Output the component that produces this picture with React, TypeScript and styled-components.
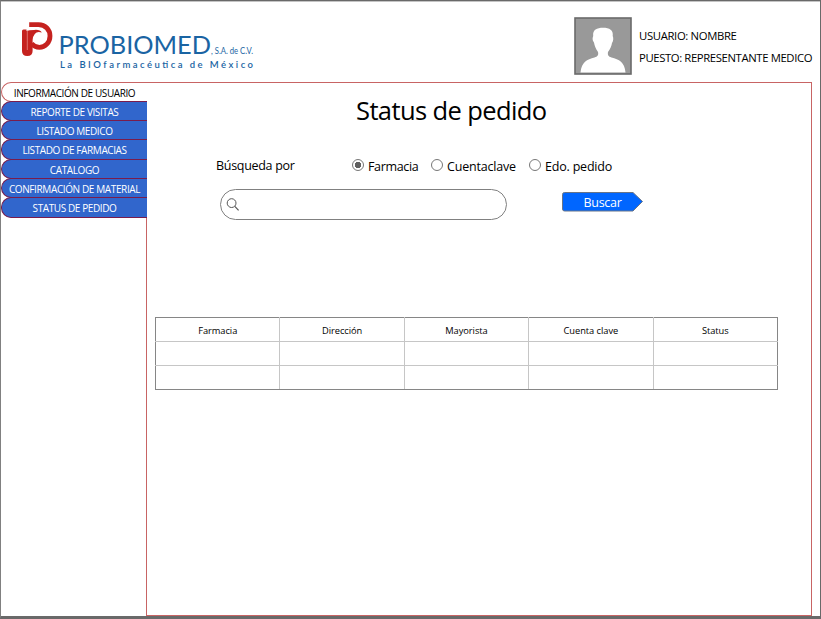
import React, { useState } from "react";
import styled, { createGlobalStyle } from "styled-components";

const GlobalStyle = createGlobalStyle`
  * { box-sizing: border-box; }
  body { margin: 0; background: #fff; color: #000; font-family: "Open Sans", "Noto Sans", sans-serif; }
`;

const Window = styled.div`
  width: 821px;
  height: 619px;
  display: flex;
  flex-direction: column;
  border: solid #696969;
  border-width: 1px 1px 3px;
  border-left-color: #808080;
  box-shadow: inset 0 1px 0 #c4c4c4;
  overflow: hidden;
`;

const Header = styled.header`
  height: 81px;
  flex: none;
  display: flex;
  align-items: flex-start;
`;

const LogoArt = styled.svg`
  display: block;
  width: 260px;
  height: 80px;
  flex: none;
`;

const Avatar = styled.svg`
  display: block;
  width: 58px;
  height: 58px;
  margin: 16px 0 0 313px;
  flex: none;
`;

const UserInfo = styled.div`
  display: flex;
  flex-direction: column;
  margin: 24px 0 0 7px;
`;

const Text = styled.span<{ $size: number; $spacing?: number; $line?: number }>`
  font-size: ${(p) => p.$size}px;
  letter-spacing: ${(p) => p.$spacing ?? 0}px;
  line-height: ${(p) => p.$line ?? 22}px;
  white-space: nowrap;
`;

const Body = styled.div`
  flex: 1;
  display: flex;
  min-height: 0;
`;

const Sidebar = styled.nav`
  width: 145px;
  flex: none;
  display: flex;
  flex-direction: column;
`;

const NavItem = styled.button<{ $active?: boolean; $height: number; $spacing: number }>`
  height: ${(p) => p.$height + 1}px;
  width: 146px;
  margin: 0 0 -1px;
  padding: 1px 0 0;
  position: relative;
  flex: none;
  display: flex;
  align-items: center;
  justify-content: center;
  border: 1px solid ${(p) => (p.$active ? "#c86464" : "#7a1c4c")};
  border-right-width: 0;
  border-radius: 10px 0 0 10px;
  background: ${(p) => (p.$active ? "#fff" : "#3166cc")};
  color: ${(p) => (p.$active ? "#000" : "#fff")};
  font: 10px "Open Sans", "Noto Sans", sans-serif;
  letter-spacing: ${(p) => p.$spacing}px;
  white-space: nowrap;
`;

const Main = styled.main`
  width: 666px;
  height: 534px;
  border: 1px solid #c86464;
  display: flex;
  flex-direction: column;
`;

const Title = styled.h1`
  margin: 8px 0 0 209px;
  font-size: 25.5px;
  font-weight: 400;
  line-height: 38px;
  letter-spacing: -0.6px;
  white-space: nowrap;
`;

const FilterRow = styled.div`
  display: flex;
  height: 22px;
  margin: 26px 0 0 69px;
`;

const FilterLabel = styled.div`
  width: 136px;
  flex: none;
  margin-top: -2px;
`;

const Option = styled.label<{ $width: number }>`
  display: flex;
  width: ${(p) => p.$width}px;
  flex: none;
  gap: 4px;
  padding-top: 1px;
`;

const Radio = styled.input`
  appearance: none;
  width: 12px;
  height: 12px;
  margin: 3px 0 0;
  flex: none;
  border: 1px solid #777;
  border-radius: 50%;
  background: #fff;
  &:checked { background: radial-gradient(circle, #606060 0 2.9px, #fff 3.5px); }
`;

const SearchRow = styled.div`
  display: flex;
  margin: 12px 0 0 73px;
`;

const SearchBox = styled.div`
  width: 287px;
  height: 31px;
  display: flex;
  align-items: center;
  gap: 6px;
  padding: 0 14px 0 5px;
  border: 1px solid #808080;
  border-radius: 16px;
`;

const SearchIcon = styled.svg`
  width: 14px;
  height: 14px;
  flex: none;
`;

const SearchInput = styled.input`
  flex: 1;
  min-width: 0;
  border: 0;
  outline: 0;
  background: transparent;
  font: 12px "Open Sans", sans-serif;
`;

const SearchButton = styled.button`
  display: grid;
  width: 83px;
  height: 22px;
  margin: 2px 0 0 54px;
  padding: 0;
  border: 0;
  background: none;
  color: #fff;
  font-family: "Open Sans", "Noto Sans", sans-serif;
  > * { grid-area: 1 / 1; }
`;

const ButtonShape = styled.svg`
  width: 83px;
  height: 21px;
`;

const Table = styled.table`
  width: 623px;
  height: 72px;
  margin: 97px 0 0 8px;
  border-collapse: collapse;
  table-layout: fixed;
  border: 1px solid #868686;
  font-size: 9.3px;
  tr { height: 24px; }
  th, td {
    padding: 0;
    border: 1px solid #c6c6c6;
    font-weight: 400;
    line-height: 14px;
    letter-spacing: -0.05px;
    text-align: center;
  }
  th { padding-top: 2px; }
  thead th { border-top-color: #868686; }
  th:first-child, td:first-child { border-left-color: #868686; }
  th:last-child, td:last-child { border-right-color: #868686; }
  tbody tr:last-child td { border-bottom-color: #868686; }
`;

const sections = [
  { label: "INFORMACIÓN DE USUARIO", height: 19, spacing: -0.4 },
  { label: "REPORTE DE VISITAS", height: 19, spacing: -0.4 },
  { label: "LISTADO MEDICO", height: 19, spacing: -0.4 },
  { label: "LISTADO DE FARMACIAS", height: 20, spacing: -0.4 },
  { label: "CATALOGO", height: 19, spacing: -0.4 },
  { label: "CONFIRMACIÓN DE MATERIAL", height: 19, spacing: -0.38 },
  { label: "STATUS DE PEDIDO", height: 20, spacing: -0.4 },
];

const criteria = [
  { label: "Farmacia", width: 79 },
  { label: "Cuentaclave", width: 98 },
  { label: "Edo. pedido", width: 90 },
];

const columns = ["Farmacia", "Dirección", "Mayorista", "Cuenta clave", "Status"];

function Logo() {
  return (
    <LogoArt viewBox="1 1 260 80" role="img" aria-label="Probiomed">
      <path
        d="M22 31Q22 29.5 23.5 29.5H26.5V31Q29 30 34 30Q40 29.3 41.8 32.5Q37 31 34.8 34Q33 36 32.6 40V51Q32.6 56 27.3 56Q22 56 22 51Z"
        fill="#c5221f"
      />
      <path d="M29.2 24.7H38.5C45.5 24.7 50 29.8 50 36C50 42.6 45 47.4 39.5 47.4C36 47.4 33.8 46.4 31.5 43.5" fill="none" stroke="#c5221f" strokeWidth="4.8" />
      <path d="M27.3 30V50" stroke="#f0a8a4" strokeWidth="0.6" />
      <g fill="#1a64a3" fontFamily="Lato, sans-serif">
        <text x="58.5" y="54" fontSize="24.5" textLength="152.5" lengthAdjust="spacingAndGlyphs">PROBIOMED</text>
        <text x="211" y="54" fontSize="8.5" textLength="42" lengthAdjust="spacingAndGlyphs">, S.A. de C.V.</text>
        <text x="60" y="68" fontSize="9.5" fontWeight="600" textLength="193">La BIOfarmacéutica de México</text>
      </g>
    </LogoArt>
  );
}

export default function App() {
  const [criterion, setCriterion] = useState("Farmacia");
  return (
    <>
      <GlobalStyle />
      <Window>
        <Header>
          <Logo />
          <Avatar viewBox="0 0 58 58">
            <rect x="1" y="1" width="56" height="56" fill="#999" stroke="#6a6a6a" strokeWidth="1.6" />
            <path d="M6.5 55.5C7.5 45 13 42.5 20.5 40.5C23.8 39.5 24.7 38 24 35C21.5 31.5 20.5 28.5 20 25.5C18 23 18.5 21 19.2 19C18.5 12.5 23 10.7 29 10.7C35.5 10.7 39.6 13 38.7 19C39.5 21 39.6 23.5 38 26C37.5 29 36.3 32 34 35C33.5 38 34.2 39.5 37.5 40.5C45 42.5 50.7 45 51.5 55.5Z" fill="#fff" />
          </Avatar>
          <UserInfo>
            <Text $size={11.3} $spacing={-0.34}>USUARIO: NOMBRE</Text>
            <Text $size={11.3} $spacing={-0.38}>PUESTO: REPRESENTANTE MEDICO</Text>
          </UserInfo>
        </Header>
        <Body>
          <Sidebar>
            {sections.map((s, i) => (
              <NavItem key={s.label} $active={i === 0} $height={s.height} $spacing={s.spacing}>
                {s.label}
              </NavItem>
            ))}
          </Sidebar>
          <Main>
            <Title>Status de pedido</Title>
            <FilterRow>
              <FilterLabel><Text $size={12.5} $spacing={-0.3}>Búsqueda por</Text></FilterLabel>
              {criteria.map((c) => (
                <Option key={c.label} $width={c.width}>
                  <Radio
                    type="radio"
                    name="criterion"
                    checked={criterion === c.label}
                    onChange={() => setCriterion(c.label)}
                  />
                  <Text $size={12.5} $spacing={c.label === "Farmacia" ? -0.35 : -0.2}>{c.label}</Text>
                </Option>
              ))}
            </FilterRow>
            <SearchRow>
              <SearchBox>
                <SearchIcon viewBox="0 0 14 14" fill="none" stroke="#555">
                  <circle cx="5.6" cy="5.1" r="4.4" />
                  <path d="M8.8 8.3L12.6 12.3" strokeWidth="1.2" />
                </SearchIcon>
                <SearchInput aria-label="Buscar" />
              </SearchBox>
              <SearchButton>
                <ButtonShape viewBox="0 0 83 21">
                  <path d="M3.5 1.5H72L81.5 10.5L72 20H3.5Q1.5 20 1.5 18V3.5Q1.5 1.5 3.5 1.5Z" fill="#0066ff" stroke="#687487" />
                </ButtonShape>
                <Text $size={12.5} $spacing={-0.3} $line={23}>Buscar</Text>
              </SearchButton>
            </SearchRow>
            <Table>
              <thead>
                <tr>{columns.map((c) => <th key={c}>{c}</th>)}</tr>
              </thead>
              <tbody>
                {[0, 1].map((r) => (
                  <tr key={r}>{columns.map((c) => <td key={c} />)}</tr>
                ))}
              </tbody>
            </Table>
          </Main>
        </Body>
      </Window>
    </>
  );
}
